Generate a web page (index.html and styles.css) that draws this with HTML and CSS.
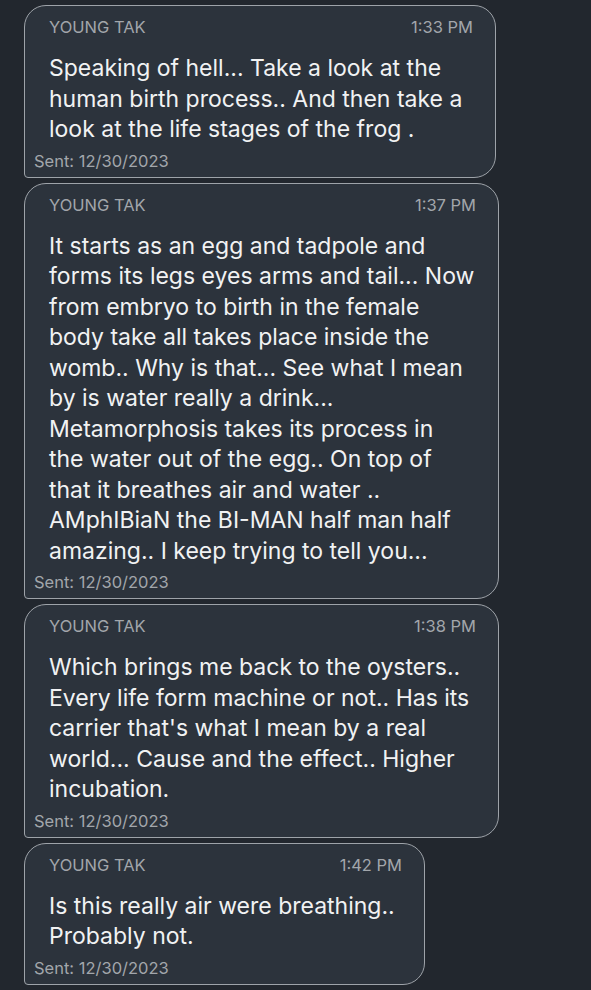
FILE: index.html
```html
<!DOCTYPE html>
<html>
<head>
<meta charset="utf-8">
<link rel="stylesheet" href="styles.css">
</head>
<body>
<div class="thread">
  <div class="bubble w1">
    <div class="head"><span class="name">YOUNG TAK</span><span class="time">1:33 PM</span></div>
    <div class="msg">Speaking of hell... Take a look at the<br>human birth process.. And then take a<br>look at the life stages of the frog .</div>
    <div class="sent">Sent: 12/30/2023</div>
  </div>
  <div class="bubble w2">
    <div class="head"><span class="name">YOUNG TAK</span><span class="time">1:37 PM</span></div>
    <div class="msg">It starts as an egg and tadpole and<br>forms its legs eyes arms and tail... Now<br>from embryo to birth in the female<br>body take all takes place inside the<br>womb.. Why is that... See what I mean<br>by is water really a drink...<br>Metamorphosis takes its process in<br>the water out of the egg.. On top of<br>that it breathes air and water ..<br>AMphIBiaN the BI-MAN half man half<br>amazing.. I keep trying to tell you...</div>
    <div class="sent">Sent: 12/30/2023</div>
  </div>
  <div class="bubble w2">
    <div class="head"><span class="name">YOUNG TAK</span><span class="time">1:38 PM</span></div>
    <div class="msg">Which brings me back to the oysters..<br>Every life form machine or not.. Has its<br>carrier that's what I mean by a real<br>world... Cause and the effect.. Higher<br>incubation.</div>
    <div class="sent">Sent: 12/30/2023</div>
  </div>
  <div class="bubble w3">
    <div class="head"><span class="name">YOUNG TAK</span><span class="time">1:42 PM</span></div>
    <div class="msg">Is this really air were breathing..<br>Probably not.</div>
    <div class="sent">Sent: 12/30/2023</div>
  </div>
</div>
</body>
</html>
```
FILE: styles.css
```css
html, body {
  margin: 0;
  padding: 0;
  background: #22272e;
}
body {
  font-family: Inter, "Noto Sans", sans-serif;
  width: 591px;
  height: 990px;
  overflow: hidden;
}
.thread {
  display: flex;
  flex-direction: column;
  align-items: flex-start;
  gap: 5px;
  padding: 5px 0 0 24px;
}
.bubble {
  box-sizing: border-box;
  background: #2c333c;
  border: 1.5px solid #9ea3a9;
  border-radius: 22px 22px 22px 4px;
  padding: 11px 22px 6px 0;
}
.w1 { width: 472px; }
.w2 { width: 475px; }
.w3 { width: 401px; }
.head {
  display: flex;
  justify-content: space-between;
  padding-left: 24px;
  font-size: 16.5px;
  line-height: 20px;
  color: #a2a6ab;
}
.msg {
  margin-top: 16px;
  padding-left: 24px;
  font-size: 23px;
  line-height: 30.5px;
  color: #f1f2f3;
  white-space: nowrap;
}
.sent {
  margin-top: 6px;
  padding-left: 9px;
  font-size: 16.5px;
  line-height: 20px;
  color: #a2a6ab;
}
```
